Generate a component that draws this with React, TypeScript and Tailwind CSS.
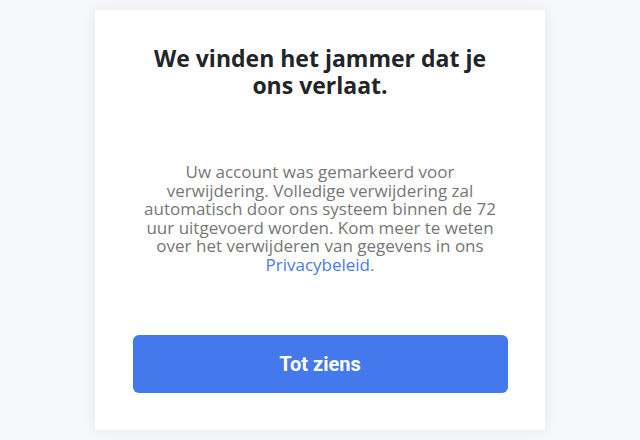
export default function App() {
  return (
    <div className="min-h-[440px] w-full bg-[#f7f8fb] pt-[10px] font-['Open_Sans','Liberation_Sans',sans-serif]">
      <div className="mx-auto flex h-[420px] w-[450px] flex-col items-center bg-white px-[37px] pt-[35px] shadow-[0_0_16px_rgba(30,40,80,0.08)]">
        <h1 className="w-[350px] text-center text-[23px] font-bold leading-[27px] text-[#222428]">
          We vinden het jammer dat je ons verlaat.
        </h1>
        <p className="mt-[64px] w-[356px] text-center text-[17px] leading-[18.6px] text-[#767676]">
          Uw account was gemarkeerd voor verwijdering. Volledige verwijdering zal automatisch door ons systeem binnen de 72 uur uitgevoerd worden. Kom meer te weten over het verwijderen van gegevens in ons{" "}
          <a href="#" className="text-[#4a7af0]">Privacybeleid</a>.
        </p>
        <button className="mt-[60px] h-[58px] w-[375px] rounded-[6px] bg-[#4479ee] font-['Roboto','Liberation_Sans',sans-serif] text-[20px] font-bold text-white">
          Tot ziens
        </button>
      </div>
    </div>
  );
}
